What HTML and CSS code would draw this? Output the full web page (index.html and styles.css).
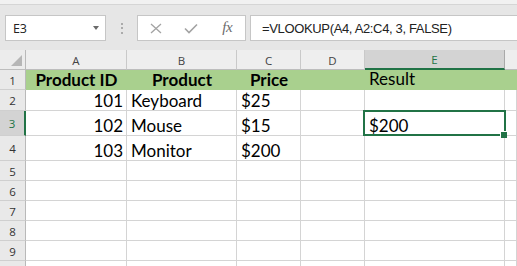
FILE: index.html
```html
<!DOCTYPE html>
<html>
<head>
<meta charset="utf-8">
<link rel="stylesheet" href="styles.css">
</head>
<body>
<div class="top-strip"></div>
<div class="toolbar">
  <div class="namebox"><span class="nb-text">E3</span><span class="caret"></span></div>
  <div class="grip"><i></i><i></i><i></i></div>
  <div class="fbtns">
    <span class="slot"><svg width="12" height="11" viewBox="0 0 12 11"><path d="M1 1 L11 10 M11 1 L1 10" stroke="#a3a3a3" stroke-width="1.3" fill="none"/></svg></span>
    <span class="slot"><svg width="14" height="11" viewBox="0 0 14 11"><path d="M1 5.5 L5 9.5 L13 1.5" stroke="#a3a3a3" stroke-width="1.6" fill="none"/></svg></span>
    <span class="slot fx">fx</span>
  </div>
  <div class="fbar">=VLOOKUP(A4, A2:C4, 3, FALSE)</div>
</div>
<div class="sheet">
  <div class="corner"><span class="tri"></span></div>
  <div class="ch">A</div><div class="ch">B</div><div class="ch">C</div><div class="ch">D</div><div class="ch sel">E</div><div class="ch last"></div>

  <div class="rh">1</div>
  <div class="c g b center">Product ID</div><div class="c g b center">Product</div><div class="c g b center">Price</div><div class="c g"></div><div class="c g result">Result</div><div class="c g"></div>

  <div class="rh">2</div>
  <div class="c right">101</div><div class="c">Keyboard</div><div class="c">$25</div><div class="c"></div><div class="c"></div><div class="c"></div>

  <div class="rh sel">3</div>
  <div class="c right">102</div><div class="c">Mouse</div><div class="c">$15</div><div class="c"></div><div class="c">$200</div><div class="c"></div>

  <div class="rh">4</div>
  <div class="c right">103</div><div class="c">Monitor</div><div class="c">$200</div><div class="c"></div><div class="c"></div><div class="c"></div>

  <div class="rh">5</div>
  <div class="c"></div><div class="c"></div><div class="c"></div><div class="c"></div><div class="c"></div><div class="c"></div>
  <div class="rh">6</div>
  <div class="c"></div><div class="c"></div><div class="c"></div><div class="c"></div><div class="c"></div><div class="c"></div>
  <div class="rh">7</div>
  <div class="c"></div><div class="c"></div><div class="c"></div><div class="c"></div><div class="c"></div><div class="c"></div>
  <div class="rh">8</div>
  <div class="c"></div><div class="c"></div><div class="c"></div><div class="c"></div><div class="c"></div><div class="c"></div>
  <div class="rh">9</div>
  <div class="c"></div><div class="c"></div><div class="c"></div><div class="c"></div><div class="c"></div><div class="c"></div>
  <div class="rh"></div>
  <div class="c"></div><div class="c"></div><div class="c"></div><div class="c"></div><div class="c"></div><div class="c"></div>

  <div class="selection"><span class="handle"></span></div>
</div>
</body>
</html>
```
FILE: styles.css
```css
html, body {
  margin: 0;
  padding: 0;
}
body {
  width: 517px;
  height: 266px;
  overflow: hidden;
  background: #ffffff;
  font-family: "Open Sans", "Noto Sans", sans-serif;
}
.top-strip {
  height: 4px;
  background: #f1f1f1;
  border-bottom: 1px solid #d5d5d5;
}
.toolbar {
  height: 45px;
  box-sizing: border-box;
  background: #e6e6e6;
  display: flex;
  align-items: flex-start;
  padding: 10px 0 0 5px;
}
.namebox {
  width: 101px;
  height: 26px;
  box-sizing: border-box;
  background: #fff;
  border: 1px solid #c6c6c6;
  display: flex;
  align-items: center;
  justify-content: space-between;
  padding: 0 6px 0 7px;
}
.nb-text {
  font-family: "Open Sans", "Noto Sans", sans-serif;
  font-size: 12.5px;
  color: #222;
  letter-spacing: -0.2px;
}
.caret {
  width: 0;
  height: 0;
  border-left: 3.5px solid transparent;
  border-right: 3.5px solid transparent;
  border-top: 4px solid #6a6a6a;
  margin-top: -1px;
}
.grip {
  width: 31px;
  height: 26px;
  display: flex;
  flex-direction: column;
  align-items: center;
  justify-content: center;
  gap: 2.5px;
}
.grip i {
  display: block;
  width: 2px;
  height: 2px;
  background: #ababab;
}
.fbtns {
  width: 109px;
  height: 26px;
  box-sizing: border-box;
  background: #fff;
  border: 1px solid #c6c6c6;
  display: grid;
  grid-template-columns: 1fr 1fr 1fr;
  align-items: center;
}
.slot {
  display: flex;
  align-items: center;
  justify-content: center;
}
.fx {
  font-family: "Liberation Serif", "DejaVu Serif", serif;
  font-style: italic;
  font-size: 15px;
  color: #6b6b6b;
  letter-spacing: -0.5px;
  margin-top: -2px;
}
.fbar {
  flex: 1;
  height: 26px;
  box-sizing: border-box;
  margin-left: 4px;
  margin-right: -3px;
  background: #fff;
  border: 1px solid #c6c6c6;
  display: flex;
  align-items: center;
  padding-left: 11px;
  font-family: "Liberation Sans", Arial, sans-serif;
  font-size: 13px;
  letter-spacing: -0.35px;
  color: #222;
}
.sheet {
  position: relative;
  display: grid;
  grid-template-columns: 26px 101px 110px 64px 64px 140px 1fr;
  grid-template-rows: 20px 20px 21px 25px 25px 20px 20px 20px 20px 20px 20px;
}
.corner {
  background: #ececec;
  border-right: 1px solid #b9b9b9;
  border-bottom: 1px solid #bdbdbd;
  position: relative;
}
.tri {
  position: absolute;
  right: 3px;
  bottom: 3px;
  width: 0;
  height: 0;
  border-left: 11px solid transparent;
  border-bottom: 11px solid #b6b6b6;
}
.ch {
  background: #eeeeee;
  border-right: 1px solid #c9c9c9;
  border-bottom: 1px solid #bdbdbd;
  display: flex;
  align-items: center;
  justify-content: center;
  font-size: 11.5px;
  color: #444;
  padding-top: 1px;
}
.ch.sel {
  background: #d3d3d3;
  color: #217346;
  border-bottom: 2px solid #217346;
  border-right-color: #a9a9a9;
}
.ch.last {
  border-right: none;
}
.rh {
  background: #e9e9e9;
  border-right: 1px solid #b9b9b9;
  border-bottom: 1px solid #cfcfcf;
  display: flex;
  align-items: center;
  justify-content: center;
  font-size: 11.5px;
  color: #333;
  padding-top: 1px;
}
.rh.sel {
  background: #d3d3d3;
  color: #217346;
  border-right: 2px solid #217346;
}
.c {
  border-right: 1px solid #d4d4d4;
  border-bottom: 1px solid #d4d4d4;
  display: flex;
  align-items: flex-end;
  padding: 0 3px 1px 4px;
  font-family: Lato, "Open Sans", sans-serif;
  font-size: 17px;
  line-height: 17px;
  color: #000;
  white-space: nowrap;
}
.c.g {
  background: #a9d08e;
  border-right-color: #a9d08e;
  border-bottom-color: #a9d08e;
}
.c.b {
  font-weight: 700;
}
.c.center {
  justify-content: center;
}
.c.right {
  justify-content: flex-end;
}
.c.result {
  padding-bottom: 2px;
}
.selection {
  position: absolute;
  left: 363px;
  top: 60px;
  width: 143px;
  height: 26px;
  box-sizing: border-box;
  border: 2px solid #217346;
}
.handle {
  position: absolute;
  right: -3px;
  bottom: -4px;
  width: 6px;
  height: 6px;
  background: #217346;
  border-left: 1px solid #fff;
  border-top: 1px solid #fff;
}
```
